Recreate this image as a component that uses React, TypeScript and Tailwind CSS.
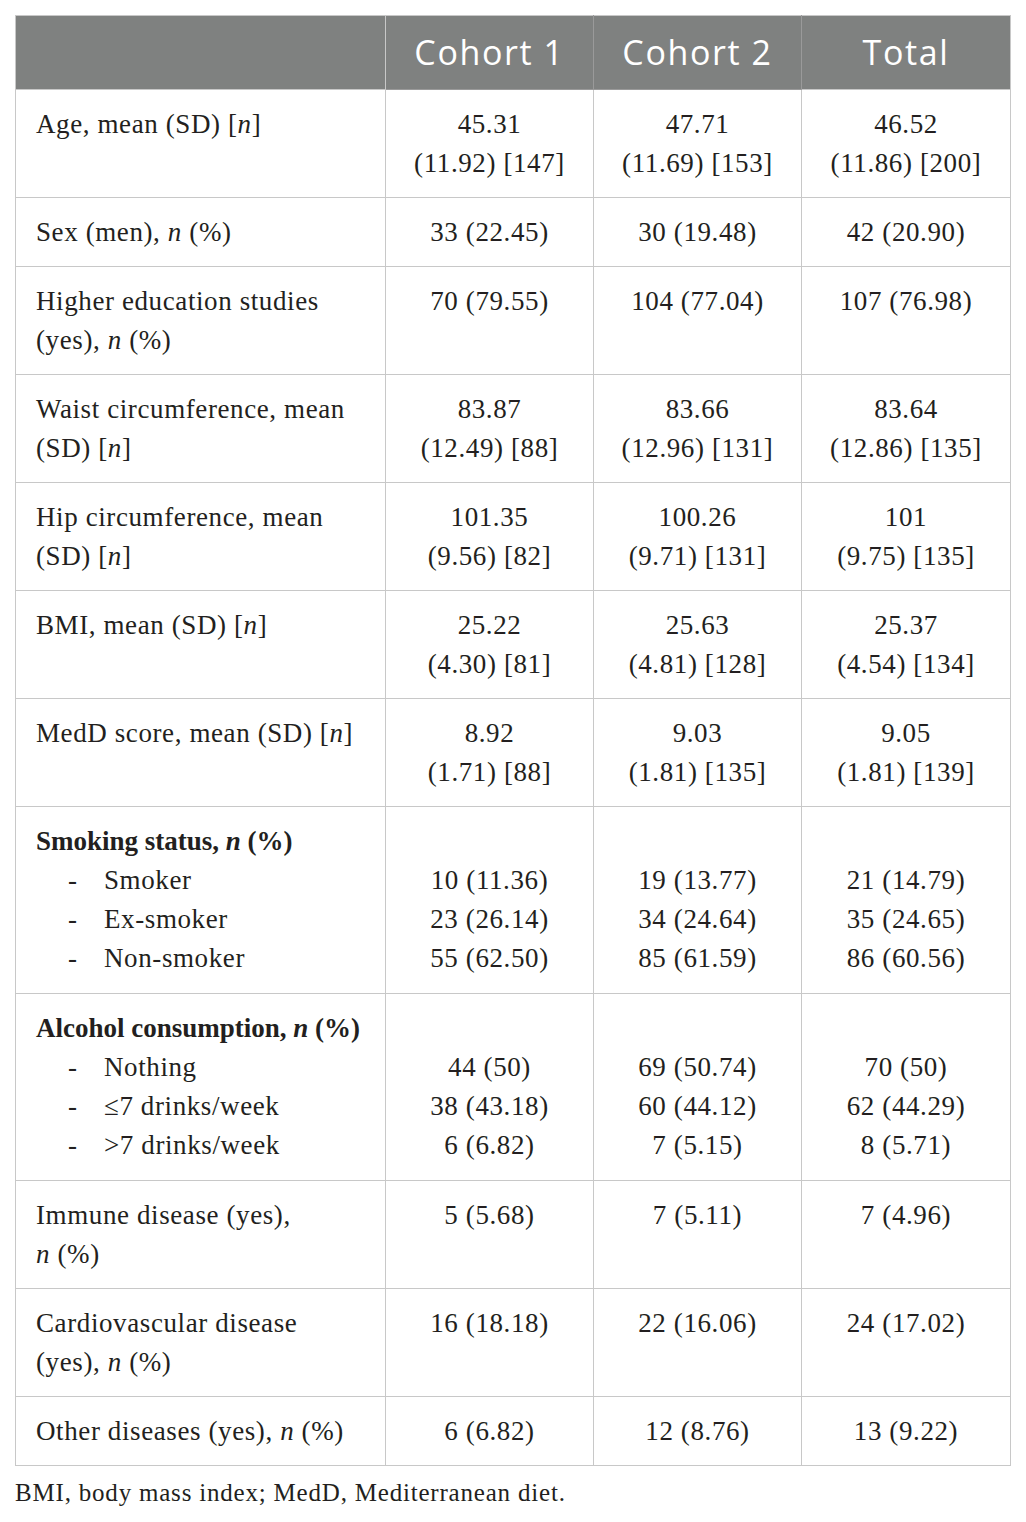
import React from 'react';

type Row = {
  label: React.ReactNode;
  values: React.ReactNode[];
};

const N = () => <i>n</i>;

const rows: Row[] = [
  { label: <>Age, mean (SD) [<N />]</>, values: [<>45.31<br />(11.92) [147]</>, <>47.71<br />(11.69) [153]</>, <>46.52<br />(11.86) [200]</>] },
  { label: <>Sex (men), <N /> (%)</>, values: ['33 (22.45)', '30 (19.48)', '42 (20.90)'] },
  { label: <>Higher education studies<br />(yes), <N /> (%)</>, values: ['70 (79.55)', '104 (77.04)', '107 (76.98)'] },
  { label: <>Waist circumference, mean<br />(SD) [<N />]</>, values: [<>83.87<br />(12.49) [88]</>, <>83.66<br />(12.96) [131]</>, <>83.64<br />(12.86) [135]</>] },
  { label: <>Hip circumference, mean<br />(SD) [<N />]</>, values: [<>101.35<br />(9.56) [82]</>, <>100.26<br />(9.71) [131]</>, <>101<br />(9.75) [135]</>] },
  { label: <>BMI, mean (SD) [<N />]</>, values: [<>25.22<br />(4.30) [81]</>, <>25.63<br />(4.81) [128]</>, <>25.37<br />(4.54) [134]</>] },
  { label: <>MedD score, mean (SD) [<N />]</>, values: [<>8.92<br />(1.71) [88]</>, <>9.03<br />(1.81) [135]</>, <>9.05<br />(1.81) [139]</>] },
];

const groups = [
  {
    title: <>Smoking status, <N /> (%)</>,
    items: ['Smoker', 'Ex-smoker', 'Non-smoker'],
    cols: [
      ['10 (11.36)', '23 (26.14)', '55 (62.50)'],
      ['19 (13.77)', '34 (24.64)', '85 (61.59)'],
      ['21 (14.79)', '35 (24.65)', '86 (60.56)'],
    ],
  },
  {
    title: <>Alcohol consumption, <N /> (%)</>,
    items: ['Nothing', '≤7 drinks/week', '>7 drinks/week'],
    cols: [
      ['44 (50)', '38 (43.18)', '6 (6.82)'],
      ['69 (50.74)', '60 (44.12)', '7 (5.15)'],
      ['70 (50)', '62 (44.29)', '8 (5.71)'],
    ],
  },
];

const tail: Row[] = [
  { label: <>Immune disease (yes),<br /><N /> (%)</>, values: ['5 (5.68)', '7 (5.11)', '7 (4.96)'] },
  { label: <>Cardiovascular disease<br />(yes), <N /> (%)</>, values: ['16 (18.18)', '22 (16.06)', '24 (17.02)'] },
  { label: <>Other diseases (yes), <N /> (%)</>, values: ['6 (6.82)', '12 (8.76)', '13 (9.22)'] },
];

const td = 'border border-[#c8c8c8] align-top pt-[15px] pb-[14px] leading-[39px]';
const tdGroup = 'border border-[#c8c8c8] align-top pt-[15px] pb-[15px] leading-[39px]';

function DataRow({ row }: { row: Row }) {
  return (
    <tr>
      <td className={`${td} pl-[20px] pr-0 text-left`}>{row.label}</td>
      {row.values.map((v, i) => (
        <td key={i} className={`${td} px-0 text-center`}>{v}</td>
      ))}
    </tr>
  );
}

export default function App() {
  return (
    <div className="bg-white w-[1026px] min-h-[1522px] pt-[15px] pl-[15px] text-[#231f20]" style={{ fontFamily: '"Liberation Serif", "Times New Roman", serif' }}>
      <table className="border-collapse w-[995px] table-fixed text-[27px] tracking-[0.6px]">
        <colgroup>
          <col className="w-[370px]" />
          <col className="w-[208px]" />
          <col className="w-[208px]" />
          <col className="w-[209px]" />
        </colgroup>
        <thead>
          <tr className="bg-[#7f8180] text-white h-[74px]" style={{ fontFamily: '"Open Sans", sans-serif' }}>
            <th className="border border-[#c8c8c8]" />
            <th className="border border-[#9a9a9a] border-t-[#c8c8c8] text-[34px] font-normal tracking-[1.6px]">Cohort 1</th>
            <th className="border border-[#9a9a9a] border-t-[#c8c8c8] text-[34px] font-normal tracking-[1.6px]">Cohort 2</th>
            <th className="border border-[#c8c8c8] text-[34px] font-normal tracking-[1.6px]">Total</th>
          </tr>
        </thead>
        <tbody>
          {rows.map((r, i) => (
            <DataRow key={i} row={r} />
          ))}
          {groups.map((g, i) => (
            <tr key={'g' + i}>
              <td className={`${tdGroup} pl-[20px] pr-0 text-left`}>
                <div className="font-bold tracking-normal">{g.title}</div>
                {g.items.map((it) => (
                  <div key={it} className="flex">
                    <span className="w-[68px] pl-[32px] shrink-0">-</span>
                    <span>{it}</span>
                  </div>
                ))}
              </td>
              {g.cols.map((c, j) => (
                <td key={j} className={`${tdGroup} px-0 text-center`}>
                  <div>&nbsp;</div>
                  {c.map((v) => (
                    <div key={v}>{v}</div>
                  ))}
                </td>
              ))}
            </tr>
          ))}
          {tail.map((r, i) => (
            <DataRow key={'t' + i} row={r} />
          ))}
        </tbody>
      </table>
      <p className="text-[25px] tracking-[0.8px] mt-[12px] leading-[30px]">BMI, body mass index; MedD, Mediterranean diet.</p>
    </div>
  );
}
